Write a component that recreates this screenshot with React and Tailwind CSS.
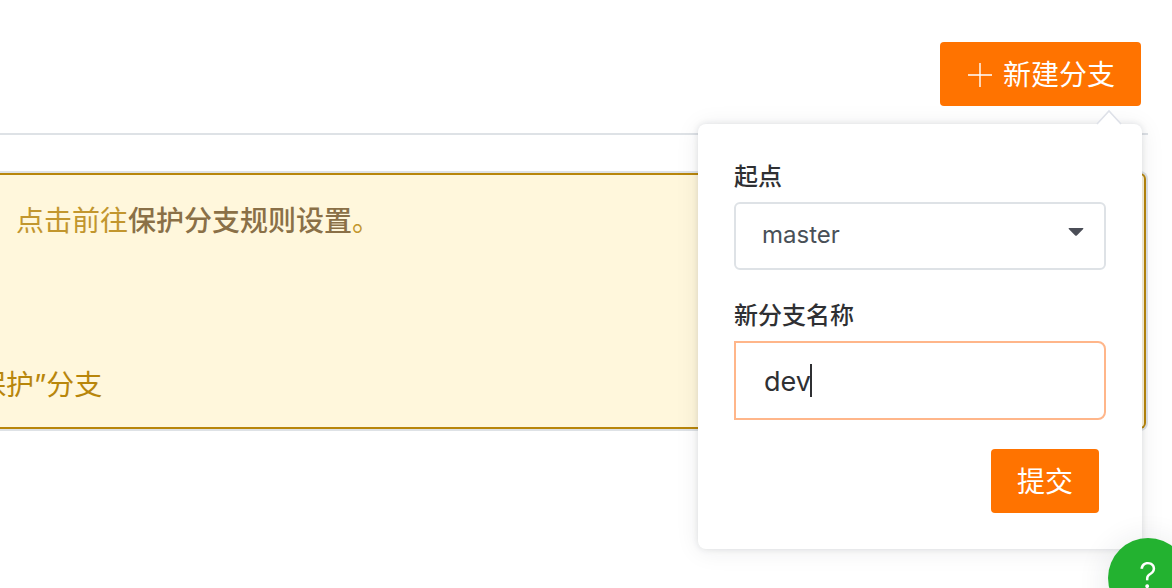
import { useState } from 'react';

function PlusIcon() {
  return (
    <svg className="h-6 w-6 shrink-0" viewBox="0 0 24 24" fill="none" stroke="currentColor" strokeWidth="1.4" aria-hidden="true">
      <path d="M12 0v24M0 12h24" />
    </svg>
  );
}

function BranchPopover() {
  const [start, setStart] = useState('master');
  const [name, setName] = useState('dev');

  return (
    <form
      className="absolute -right-px top-full z-10 mt-[18px] flex w-[444px] flex-col rounded-lg bg-white p-9 text-[#2f3033] shadow-[0_0_6px_rgba(33,43,54,0.13),0_2px_24px_rgba(33,43,54,0.08)]"
      onSubmit={(e) => e.preventDefault()}
    >
      <svg className="absolute -top-[15px] right-5 h-4 w-[26px]" viewBox="0 0 26 16" aria-hidden="true">
        <path d="M0 16L13 2l13 14z" fill="#fff" />
        <path d="M1 15L13 2l12 13" fill="none" stroke="#dee1e8" strokeWidth="1.6" />
      </svg>

      <label htmlFor="start" className="mb-2 text-2xl/[34px] font-medium">起点</label>
      <div className="relative">
        <select
          id="start"
          value={start}
          onChange={(e) => setStart(e.target.value)}
          className="h-[68px] w-full appearance-none rounded-md border-2 border-[#dee2e6] bg-white px-[26px] pb-0.5 text-2xl text-[#495057] outline-none"
        >
          <option value="master">master</option>
        </select>
        <svg className="pointer-events-none absolute right-[22px] top-[26px] h-2 w-4" viewBox="0 0 16 8" aria-hidden="true">
          <path d="M1 0h14q.8.4 0 1.2L8.8 7.4q-.8.8-1.6 0L1 1.2Q.2.4 1 0z" fill="#4b4e57" />
        </svg>
      </div>

      <label htmlFor="name" className="mb-2 mt-[29px] text-2xl/[34px] font-medium">新分支名称</label>
      <div className="flex h-[79px] items-center rounded-r-lg border-2 border-[#ffb68a] px-7">
        <input
          id="name"
          type="text"
          value={name}
          onChange={(e) => setName(e.target.value)}
          className="max-w-full pt-1 text-[27px] outline-none [field-sizing:content]"
        />
        <span className="-ml-px h-[33px] w-0.5 shrink-0 bg-[#2f3033]" />
      </div>

      <button type="submit" className="mr-[7px] mt-[29px] h-16 self-end rounded bg-[#ff7300] px-[26px] pt-0.5 text-[28px] text-white">
        提交
      </button>
    </form>
  );
}

export default function App() {
  return (
    <div className="min-h-screen overflow-hidden bg-white pr-6 font-['Inter','Noto_Sans_CJK_SC',sans-serif]">
      <header className="flex justify-end border-b-2 border-[#dee2e6] pb-[27px] pr-[7px] pt-[42px]">
        <div className="relative">
          <button type="button" className="flex h-16 items-center gap-[11px] rounded bg-[#ff7300] pl-7 pr-[26px] pt-0.5 text-[28px] text-white">
            <PlusIcon />
            新建分支
          </button>
          <BranchPopover />
        </div>
      </header>

      <main className="mt-9 rounded-r-lg border-y-2 border-r-2 border-[#dee2e6]">
        <div className="flex flex-col gap-[124px] rounded-r-md border-y-2 border-r-2 border-[#b8860b] bg-[#fff7dc] pb-[22px] pt-[26px] text-[28px]/10 text-[#b8860b]">
          <p className="pl-4 text-[#c2962e]">
            点击前往
            <a href="#rules" className="font-medium text-[#8a7047]">保护分支规则设置</a>
            。
          </p>
          <p className="-ml-[22px]">保护”分支</p>
        </div>
      </main>

      <button
        type="button"
        aria-label="帮助"
        className="fixed -bottom-[30px] -right-4 z-20 flex size-20 items-center justify-center rounded-full bg-[#23b230] pb-1.5 text-[36px] font-light text-white shadow-[0_4px_32px_rgba(33,43,54,0.12)]"
      >
        ?
      </button>
    </div>
  );
}
